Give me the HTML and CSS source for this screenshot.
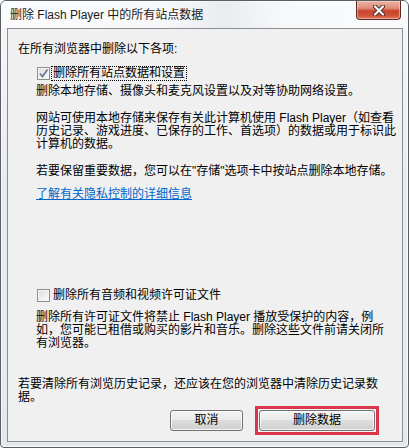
FILE: index.html
```html
<!DOCTYPE html>
<html lang="zh-CN">
<head>
<meta charset="utf-8">
<title>删除 Flash Player 中的所有站点数据</title>
<link rel="stylesheet" href="styles.css">
</head>
<body>
<div class="window">
  <div class="titlebar">
    <span class="title">删除 Flash Player 中的所有站点数据</span>
    <button class="close" aria-label="关闭">
      <svg width="14" height="11" viewBox="0 0 14 11">
        <path d="M3 1.5 L11 9.5 M11 1.5 L3 9.5" stroke="#4a2a24" stroke-width="4" stroke-linecap="round"/>
        <path d="M3 1.5 L11 9.5 M11 1.5 L3 9.5" stroke="#ffffff" stroke-width="2.2" stroke-linecap="round"/>
      </svg>
    </button>
  </div>
  <div class="client">
    <p class="heading">在所有浏览器中删除以下各项:</p>
    <div class="section">
      <label class="check-row first">
        <span class="box checked">
          <svg width="11" height="11" viewBox="0 0 11 11"><path d="M2 5.5 L4.5 8.5 L9.5 1.5" fill="none" stroke="#6a7b98" stroke-width="1.8"/></svg>
        </span>
        <span class="label focus">删除所有站点数据和设置</span>
      </label>
      <p class="text desc">删除本地存储、摄像头和麦克风设置以及对等协助网络设置。</p>
      <p class="text para">网站可使用本地存储来保存有关此计算机使用 Flash Player（如查看<br>历史记录、游戏进度、已保存的工作、首选项）的数据或用于标识此<br>计算机的数据。</p>
      <p class="text keep">若要保留重要数据，您可以在"存储"选项卡中按站点删除本地存储。</p>
      <p class="text linkline"><a class="link" href="#">了解有关隐私控制的详细信息</a></p>
      <label class="check-row second">
        <span class="box"></span>
        <span class="label">删除所有音频和视频许可证文件</span>
      </label>
      <p class="text para2">删除所有许可证文件将禁止 Flash Player 播放受保护的内容，例<br>如，您可能已租借或购买的影片和音乐。删除这些文件前请关闭所<br>有浏览器。</p>
    </div>
    <p class="text bottom">若要清除所有浏览历史记录，还应该在您的浏览器中清除历史记录数<br>据。</p>
    <div class="buttons">
      <button class="btn cancel">取消</button>
      <span class="highlight"><button class="btn primary">删除数据</button></span>
    </div>
  </div>
</div>
</body>
</html>
```

FILE: styles.css
```css
html, body {
  margin: 0;
  padding: 0;
  background: #ffffff;
}

body {
  font-family: "Liberation Sans", "Noto Sans CJK SC", sans-serif;
  font-size: 12px;
  color: #000;
}

.window {
  box-sizing: border-box;
  width: 409px;
  height: 448px;
  border: 1px solid #5a5e63;
  border-radius: 6px 6px 4px 4px;
  background: linear-gradient(180deg, #f5f7f9 0%, #e9ecef 40%, #e6e9ec 100%);
  box-shadow: inset 0 0 0 1px rgba(255, 255, 255, 0.7);
  display: flex;
  flex-direction: column;
  overflow: hidden;
}

.titlebar {
  height: 27px;
  display: flex;
  align-items: flex-start;
  background: linear-gradient(90deg, rgba(255,255,255,0.6) 0%, rgba(255,255,255,0.2) 40%, rgba(200,205,210,0.25) 55%, rgba(255,255,255,0.3) 70%, rgba(255,255,255,0.5) 100%);
}

.title {
  margin-left: 9px;
  margin-top: 7px;
  line-height: 14px;
  color: #1c1c1c;
  font-family: "Liberation Sans", "Noto Sans CJK SC", sans-serif;
  font-size: 12px;
}

.close {
  margin-left: auto;
  margin-right: 7px;
  width: 45px;
  height: 19px;
  padding: 0;
  border: 1px solid #5b2a22;
  border-top: none;
  border-radius: 0 0 4px 4px;
  background: linear-gradient(180deg, #eab3a6 0%, #e08d7a 40%, #c9432b 55%, #cf5238 80%, #e07a5c 100%);
  box-shadow: inset 0 0 0 1px rgba(255, 220, 210, 0.5);
  display: flex;
  align-items: center;
  justify-content: center;
}

.client {
  box-sizing: border-box;
  width: 396px;
  height: 414px;
  margin-left: 6px;
  border: 1px solid #8b8f94;
  background: #f0f0f0;
  padding: 14px 0 0 10px;
  display: flex;
  flex-direction: column;
}

p {
  margin: 0;
}

.heading,
.text,
.label {
  line-height: 13px;
  white-space: nowrap;
}

.section {
  padding-left: 18px;
  display: flex;
  flex-direction: column;
}

.check-row {
  display: flex;
  align-items: center;
  height: 13px;
  margin-left: 1px;
}

.check-row.first {
  margin-top: 11px;
}

.check-row.second {
  margin-top: 88px;
}

.box {
  box-sizing: border-box;
  width: 13px;
  height: 13px;
  border: 1px solid #8e8f8f;
  background: linear-gradient(135deg, #dcdcdc 0%, #f0f0f0 60%, #fbfbfb 100%);
  box-shadow: inset 0 0 0 1px #f4f4f4;
  display: flex;
  align-items: center;
  justify-content: center;
}

.label {
  margin-left: 2px;
  padding: 0 1px;
}

.label.focus {
  outline: 1px dotted #000;
  outline-offset: 0;
}

.desc {
  margin-top: 5px;
}

.para {
  margin-top: 14px;
}

.keep {
  margin-top: 14px;
}

.linkline {
  margin-top: 10px;
}

.link {
  color: #0066cc;
  text-decoration: underline;
}

.para2 {
  margin-top: 9px;
}

.bottom {
  margin-top: 28px;
}

.buttons {
  margin-top: 2px;
  display: flex;
  align-items: center;
  justify-content: flex-end;
  gap: 12px;
  padding-right: 23px;
}

.btn {
  box-sizing: border-box;
  height: 21px;
  padding: 0;
  border: 1px solid #707070;
  border-radius: 3px;
  background: linear-gradient(180deg, #f2f2f2 0%, #ebebeb 45%, #dddddd 50%, #cfcfcf 100%);
  box-shadow: inset 0 0 0 1px rgba(255, 255, 255, 0.8);
  font-family: "Liberation Sans", "Noto Sans CJK SC", sans-serif;
  font-size: 12px;
  line-height: 17px;
  color: #000;
}

.cancel {
  width: 73px;
}

.highlight {
  display: flex;
  padding: 1px;
  border: 3px solid #d9364c;
  background: #f7f7f7;
}

.primary {
  width: 116px;
}
```
